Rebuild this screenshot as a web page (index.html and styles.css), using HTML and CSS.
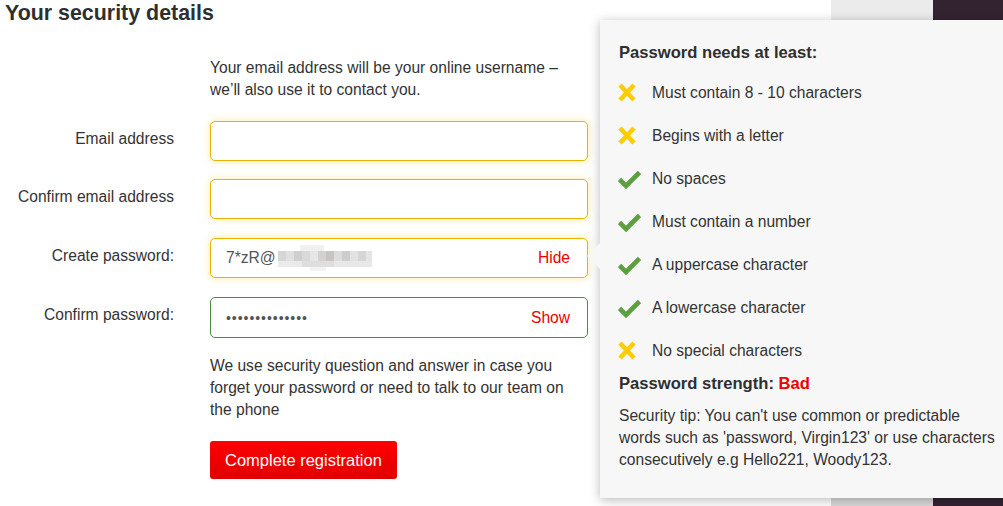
FILE: index.html
```html
<!DOCTYPE html>
<html lang="en">
<head>
<meta charset="utf-8">
<title>Your security details</title>
<link rel="stylesheet" href="styles.css">
</head>
<body>
<div class="page">
  <main class="main">
    <h1 class="title">Your security details</h1>
    <div class="form">
      <p class="intro">Your email address will be your online username – we’ll also use it to contact you.</p>

      <div class="row">
        <label class="label">Email address</label>
        <div class="field field-focus"></div>
      </div>
      <div class="row">
        <label class="label">Confirm email address</label>
        <div class="field field-focus"></div>
      </div>
      <div class="row">
        <label class="label">Create password:</label>
        <div class="field field-focus">
          <span class="value">7*zR@<svg class="redact" width="96" height="26" viewBox="0 0 96 26" aria-hidden="true">
            <rect x="22" y="0" width="24" height="6" fill="#f0f0f0"/>
            <rect x="0" y="6" width="8" height="10" fill="#d6d6d6"/>
            <rect x="8" y="6" width="8" height="10" fill="#e0e0e0"/>
            <rect x="16" y="6" width="8" height="10" fill="#cfcfcf"/>
            <rect x="24" y="6" width="8" height="10" fill="#d9d9d9"/>
            <rect x="32" y="6" width="8" height="10" fill="#e6e6e6"/>
            <rect x="40" y="6" width="8" height="10" fill="#d2d2d2"/>
            <rect x="48" y="6" width="8" height="10" fill="#c8c4c2"/>
            <rect x="56" y="6" width="8" height="10" fill="#dcdcdc"/>
            <rect x="64" y="6" width="8" height="10" fill="#cdcdcd"/>
            <rect x="72" y="6" width="8" height="10" fill="#e2e2e2"/>
            <rect x="80" y="6" width="8" height="10" fill="#d5d5d5"/>
            <rect x="88" y="6" width="6" height="10" fill="#e4e4e4"/>
            <rect x="0" y="16" width="24" height="6" fill="#eaeaea"/>
            <rect x="24" y="16" width="32" height="6" fill="#dedede"/>
            <rect x="56" y="16" width="38" height="6" fill="#e8e8e8"/>
            <rect x="32" y="22" width="16" height="4" fill="#f2f2f2"/>
          </svg></span>
          <span class="toggle">Hide</span>
        </div>
      </div>
      <div class="row row-last">
        <label class="label">Confirm password:</label>
        <div class="field field-valid">
          <span class="dots">••••••••••••••</span>
          <span class="toggle">Show</span>
        </div>
      </div>

      <p class="note">We use security question and answer in case you forget your password or need to talk to our team on the phone</p>
      <div class="actions">
        <button class="btn" type="button">Complete registration</button>
      </div>
    </div>
  </main>
  <div class="side-light"></div>
  <div class="side-dark"></div>

  <aside class="tooltip">
    <span class="arrow"></span>
    <h2 class="tip-title">Password needs at least:</h2>
    <ul class="rules">
      <li class="rule"><svg class="ico" width="23" height="22" viewBox="0 0 23 22"><path d="M2 3 L16 18 M16 3 L2 18" stroke="#ffcc00" stroke-width="4.6" fill="none"/></svg>Must contain 8 - 10 characters</li>
      <li class="rule"><svg class="ico" width="23" height="22" viewBox="0 0 23 22"><path d="M2 3 L16 18 M16 3 L2 18" stroke="#ffcc00" stroke-width="4.6" fill="none"/></svg>Begins with a letter</li>
      <li class="rule"><svg class="ico" width="23" height="22" viewBox="0 0 23 22"><path d="M1.5 11.5 L8 18 L21.5 4.5" stroke="#5c9f3e" stroke-width="4.6" fill="none"/></svg>No spaces</li>
      <li class="rule"><svg class="ico" width="23" height="22" viewBox="0 0 23 22"><path d="M1.5 11.5 L8 18 L21.5 4.5" stroke="#5c9f3e" stroke-width="4.6" fill="none"/></svg>Must contain a number</li>
      <li class="rule"><svg class="ico" width="23" height="22" viewBox="0 0 23 22"><path d="M1.5 11.5 L8 18 L21.5 4.5" stroke="#5c9f3e" stroke-width="4.6" fill="none"/></svg>A uppercase character</li>
      <li class="rule"><svg class="ico" width="23" height="22" viewBox="0 0 23 22"><path d="M1.5 11.5 L8 18 L21.5 4.5" stroke="#5c9f3e" stroke-width="4.6" fill="none"/></svg>A lowercase character</li>
      <li class="rule"><svg class="ico" width="23" height="22" viewBox="0 0 23 22"><path d="M2 3 L16 18 M16 3 L2 18" stroke="#ffcc00" stroke-width="4.6" fill="none"/></svg>No special characters</li>
    </ul>
    <p class="strength">Password strength: <span class="bad">Bad</span></p>
    <p class="tip">Security tip: You can't use common or predictable words such as 'password, Virgin123' or use characters consecutively e.g Hello221, Woody123.</p>
  </aside>
</div>
</body>
</html>
```

FILE: styles.css
```css
* { box-sizing: border-box; }

html, body {
  margin: 0;
  padding: 0;
}

body {
  background: #ffffff;
  font-family: "Liberation Sans", Arial, sans-serif;
  color: #333333;
  font-size: 15.6px;
  line-height: 22px;
  overflow: hidden;
}

.page {
  position: relative;
  display: flex;
  width: 1003px;
  height: 506px;
}

.main {
  width: 831px;
  flex: none;
}

.side-light {
  width: 102px;
  flex: none;
  background: linear-gradient(#ebebeb, #e6e6e6 60%, #d9d9d9);
}

.side-dark {
  flex: 1;
  background: #332331;
}

.title {
  margin: 0;
  padding-left: 5px;
  font-size: 21.4px;
  line-height: 26px;
  font-weight: bold;
  color: #2f2f2f;
}

.form {
  display: grid;
  grid-template-columns: 174px 378px;
  column-gap: 36px;
  margin-top: 31px;
}

.intro {
  grid-column: 2;
  margin: 0 0 20px;
  padding-right: 20px;
}

.row {
  display: contents;
}

.label {
  grid-column: 1;
  text-align: right;
  padding-top: 7px;
  margin-bottom: 18px;
}

.row-last .label { margin-bottom: 0; }

.field {
  grid-column: 2;
  height: 40px;
  margin-bottom: 18px;
  border: 1px solid #e8b400;
  border-radius: 5px;
  background: #fff;
  display: flex;
  align-items: center;
  justify-content: space-between;
  padding: 0 17px 0 15px;
}

.field-focus {
  box-shadow: 0 0 7px 1px rgba(255, 204, 40, 0.35);
}

.row:nth-child(4) .field { margin-bottom: 19px; }
.row:nth-child(3) .field { margin-bottom: 19px; }

.field-valid {
  border-color: #4a8c3f;
  margin-bottom: 0;
  height: 41px;
}

.value {
  display: flex;
  align-items: center;
  color: #555555;
}

.redact {
  display: block;
  margin-left: 2px;
}

.dots {
  color: #555555;
  font-size: 14px;
  letter-spacing: 0.95px;
}

.toggle {
  color: #ee0000;
}

.note {
  grid-column: 2;
  margin: 17px 0 20px;
}

.actions {
  grid-column: 2;
}

.btn {
  height: 38px;
  padding: 0 15px;
  border: none;
  border-radius: 3px;
  background: linear-gradient(#ff0000, #e00000);
  color: #ffffff;
  font-family: "Liberation Sans", Arial, sans-serif;
  font-size: 16.5px;
  line-height: 22px;
  cursor: pointer;
}

.tooltip {
  position: absolute;
  left: 600px;
  top: 20px;
  width: 420px;
  padding: 22px 19px 27px 19px;
  background: #f7f7f7;
  box-shadow: 0 2px 10px rgba(0, 0, 0, 0.28);
}

.arrow {
  position: absolute;
  left: -13px;
  top: 223px;
  width: 0;
  height: 0;
  border-top: 13px solid transparent;
  border-bottom: 13px solid transparent;
  border-right: 13px solid #f7f7f7;
}

.tip-title {
  margin: 0;
  font-size: 16.6px;
  line-height: 22px;
  font-weight: bold;
  color: #2f2f2f;
}

.rules {
  list-style: none;
  margin: 18px 0 0;
  padding: 0;
  display: flex;
  flex-direction: column;
  gap: 21px;
}

.rule {
  display: flex;
  align-items: center;
  height: 22px;
}

.ico {
  flex: none;
  margin-right: 11px;
  margin-left: -1px;
}

.strength {
  margin: 11px 0 0;
  font-size: 16.6px;
  font-weight: bold;
  color: #2f2f2f;
}

.bad {
  color: #ee0000;
}

.tip {
  margin: 10px 0 0;
}
```
